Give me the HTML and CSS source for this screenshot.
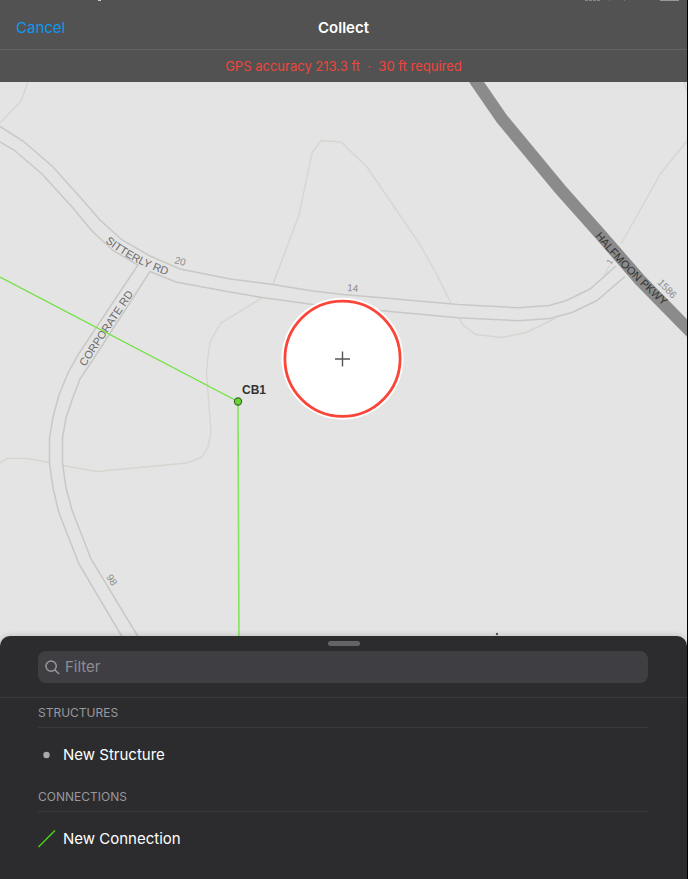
FILE: index.html
```html
<!DOCTYPE html>
<html lang="en">
<head>
<meta charset="utf-8">
<meta name="viewport" content="width=device-width, initial-scale=1">
<title>Collect</title>
<link rel="stylesheet" href="styles.css">
</head>
<body>
<div class="app">
  <header class="top">
    <svg class="status-marks" viewBox="0 0 687 4" preserveAspectRatio="none" aria-hidden="true">
      <path d="M98 .5h3" stroke="#ccc"/>
      <path d="M585 .5h15" stroke="#888" stroke-dasharray="3 1"/>
      <path d="M609 .5h1M624 .5h1" stroke="#777"/>
      <path d="M660 .5h19" stroke="#999"/>
    </svg>
    <div class="nav">
      <button class="cancel" type="button">Cancel</button>
      <h1 class="title">Collect</h1>
    </div>
    <p class="accuracy">GPS accuracy 213.3 ft &nbsp;·&nbsp; 30 ft required</p>
  </header>

  <main class="map">
    <svg class="map-canvas" viewBox="0 82 687 566" preserveAspectRatio="xMidYMid slice" role="img" aria-label="Map">
      <defs>
        <path id="sitterly" d="M105 242Q132 264 172 277"/>
        <path id="corporate" d="M85 367L136 290"/>
        <path id="halfmoon" d="M595 236Q624 272 666 308"/>
      </defs>
      <g class="parcel">
        <path d="M28 82L21 101L0 123"/>
        <path d="M273 284L299 215L312 153L321 140.5L341 142L367 167L419 243L436 273L451 303"/>
        <path d="M262 298L221 323L210 342L208 357L206.500 372L211 432L208 447L202 457L187 463L150 466.500L97 471.500L63 465.500M49 462.500L28 458.500H7L0 463"/>
        <path d="M459 318L463 325L476 334.500L502 337.500L526 332.500L555 318.500"/>
        <path d="M621 244L661 173L687 141M684 82L687 91M609 266L603 278"/>
      </g>
      <g class="road">
        <path d="M0 126.500L23 141L52 166L80 197L100 220L122 240L150 256L180 269L230 279L273 284.500L313 291L343 294.500L385 298L458 304.500L518 307.700L549 305.500L566 300.700L590 289L616 266"/>
        <path d="M0 142L14 150L42 174L73 208L92 231L113 250.500L138 265L78 355L68 373L59 395L53 417L49.500 438V463L53 488L59 513L79 564L121 635L129 648"/>
        <path d="M625 276.500L597 300.500L572 312.500L550 318.500L518 320.700L458 317.700L385 311L313 304.500L262 297.500L230 292L176 282L150 271.500L96 355L80 379L72 400L66 418L62.500 438V463L66 488L72 510L91 559L137 635L145 648"/>
      </g>
      <path class="highway" d="M470 72L476.500 82L502 119L560 189L600 234L640 280L687 328L697 338"/>
      <g class="road-name">
        <text><textPath href="#sitterly">SITTERLY RD</textPath></text>
        <text><textPath href="#corporate">CORPORATE RD</textPath></text>
        <text class="on-dark"><textPath href="#halfmoon">HALFMOON PKWY</textPath></text>
      </g>
      <g class="house">
        <text transform="translate(174 263) rotate(15)">20</text>
        <text transform="translate(347 291) rotate(4)">14</text>
        <text transform="translate(657 283) rotate(46)">1586</text>
        <text transform="translate(106 577) rotate(58)">98</text>
        <text transform="translate(612 263) rotate(-58)" text-anchor="middle" class="house-small">1</text>
      </g>
      <path class="pipe" d="M0 277L238 401.500"/>
      <path class="pipe main-pipe" d="M238 401.500L239 648"/>
      <circle cx="238" cy="401.500" r="3.600" fill="#66d72f" stroke="#3d6a2c" stroke-width="1.200"/>
      <text class="node-name" x="242" y="394">CB1</text>
      <circle cx="497" cy="634" r="1.200" fill="#555"/>
      <g class="target">
        <circle cx="342.500" cy="358.700" r="61" fill="#fff" fill-opacity=".97"/>
        <circle cx="342.500" cy="358.700" r="57.600" fill="none" stroke="#fb4539" stroke-width="2.800"/>
        <path d="M335 359H350M342.500 351.500V366.500" stroke="#555" stroke-width="1.400"/>
      </g>
    </svg>
  </main>

  <section class="sheet" aria-label="Templates">
    <div class="grip"></div>
    <label class="search">
      <svg class="search-icon" viewBox="0 0 16 16" aria-hidden="true"><circle cx="6.500" cy="6.500" r="5.500"/><path d="M10.600 10.600L15 15"/></svg>
      <input type="search" placeholder="Filter" aria-label="Filter">
    </label>
    <div class="groups">
      <h2 class="group-title">STRUCTURES</h2>
      <button class="item" type="button">
        <svg class="item-icon" viewBox="0 0 18 18" aria-hidden="true"><circle cx="8.500" cy="9" r="3.200" fill="#aaa"/></svg>
        New Structure
      </button>
      <h2 class="group-title">CONNECTIONS</h2>
      <button class="item" type="button">
        <svg class="item-icon" viewBox="0 0 18 18" aria-hidden="true"><path d="M.5 17L17 .5" stroke="#4bd214" stroke-width="1.500"/></svg>
        New Connection
      </button>
    </div>
  </section>
</div>
</body>
</html>
```
FILE: styles.css
```css
* { box-sizing: border-box; }

body {
  margin: 0;
  background: #2c2c2e;
  color: #fff;
  font-family: Inter, "Liberation Sans", sans-serif;
}

button {
  margin: 0;
  padding: 0;
  border: 0;
  background: none;
  font: inherit;
}

.app {
  display: flex;
  flex-direction: column;
  height: 100vh;
  border-right: 1px solid #000;
}

.top {
  position: relative;
  background: #525252;
}

.status-marks {
  position: absolute;
  top: 0;
  left: 0;
  width: 100%;
  height: 4px;
}

.nav {
  display: grid;
  grid-template-columns: 1fr auto 1fr;
  align-items: center;
  padding: 16px 16px 9px;
  border-bottom: 1px solid #626264;
  line-height: 24px;
}

.cancel {
  justify-self: start;
  color: #0f98f0;
  font-size: 15px;
}

.title {
  margin: 0;
  font-size: 15px;
  font-weight: 600;
}

.accuracy {
  margin: 0;
  padding: 6px 16px;
  color: #ee453c;
  font-size: 13px;
  line-height: 20px;
  text-align: center;
}

.map {
  display: flex;
  flex: 1;
  min-height: 0;
  background: #e4e4e4;
}

.map-canvas {
  flex: 1;
  min-width: 0;
}

.parcel {
  fill: none;
  stroke: #d6d6d1;
  stroke-width: 1.4;
}

.road {
  fill: none;
  stroke: #c8c8c5;
  stroke-width: 1.5;
}

.highway {
  fill: none;
  stroke: #8b8b8b;
  stroke-width: 12.4;
}

.road-name {
  fill: #6c6c6c;
  font: 12px "Liberation Sans", sans-serif;
  font-size: 11px;
}

.on-dark { fill: #333; }

.house {
  fill: #8c8c8c;
  font: 10px "Liberation Sans", sans-serif;
}

.house-small { font-size: 8px; }

.pipe {
  fill: none;
  stroke: #6ee23c;
  stroke-width: 1.4;
}

.main-pipe {
  stroke: #84e35c;
  stroke-width: 1.6;
}

.node-name {
  fill: #333;
  font: bold 12px "Liberation Sans", sans-serif;
}

.sheet {
  position: relative;
  margin-top: -12px;
  padding-top: 5px;
  border-radius: 10px 10px 0 0;
  background: #2c2c2e;
  box-shadow: 0 0 6px rgba(0, 0, 0, 0.2);
}

.grip {
  width: 32px;
  height: 5px;
  margin: 0 auto 5px;
  border-radius: 3px;
  background: #646468;
}

.search {
  display: flex;
  align-items: center;
  gap: 5px;
  height: 32px;
  margin: 0 39px 14px 38px;
  padding: 0 7px;
  border-radius: 8px;
  background: #3f3e43;
}

.search-icon {
  width: 15px;
  height: 15px;
  fill: none;
  stroke: #98989e;
  stroke-width: 1.6;
}

.search input {
  flex: 1;
  min-width: 0;
  padding: 0;
  border: 0;
  outline: 0;
  background: none;
  color: #fff;
  font: 15px/20px Inter, "Liberation Sans", sans-serif;
}

.search input::placeholder {
  color: #8e8e94;
  opacity: 1;
}

.groups {
  padding: 0 39px 13px 38px;
  border-top: 1px solid #39393b;
}

.group-title {
  margin: 0;
  padding: 5px 0;
  border-bottom: 1px solid #39393b;
  color: #98989d;
  font-size: 12px;
  font-weight: 400;
  line-height: 19px;
}

.item {
  display: flex;
  align-items: center;
  gap: 7px;
  width: 100%;
  height: 54px;
  color: #fff;
  font-size: 15px;
  line-height: 20px;
}

.item-icon {
  width: 18px;
  height: 18px;
}
```
